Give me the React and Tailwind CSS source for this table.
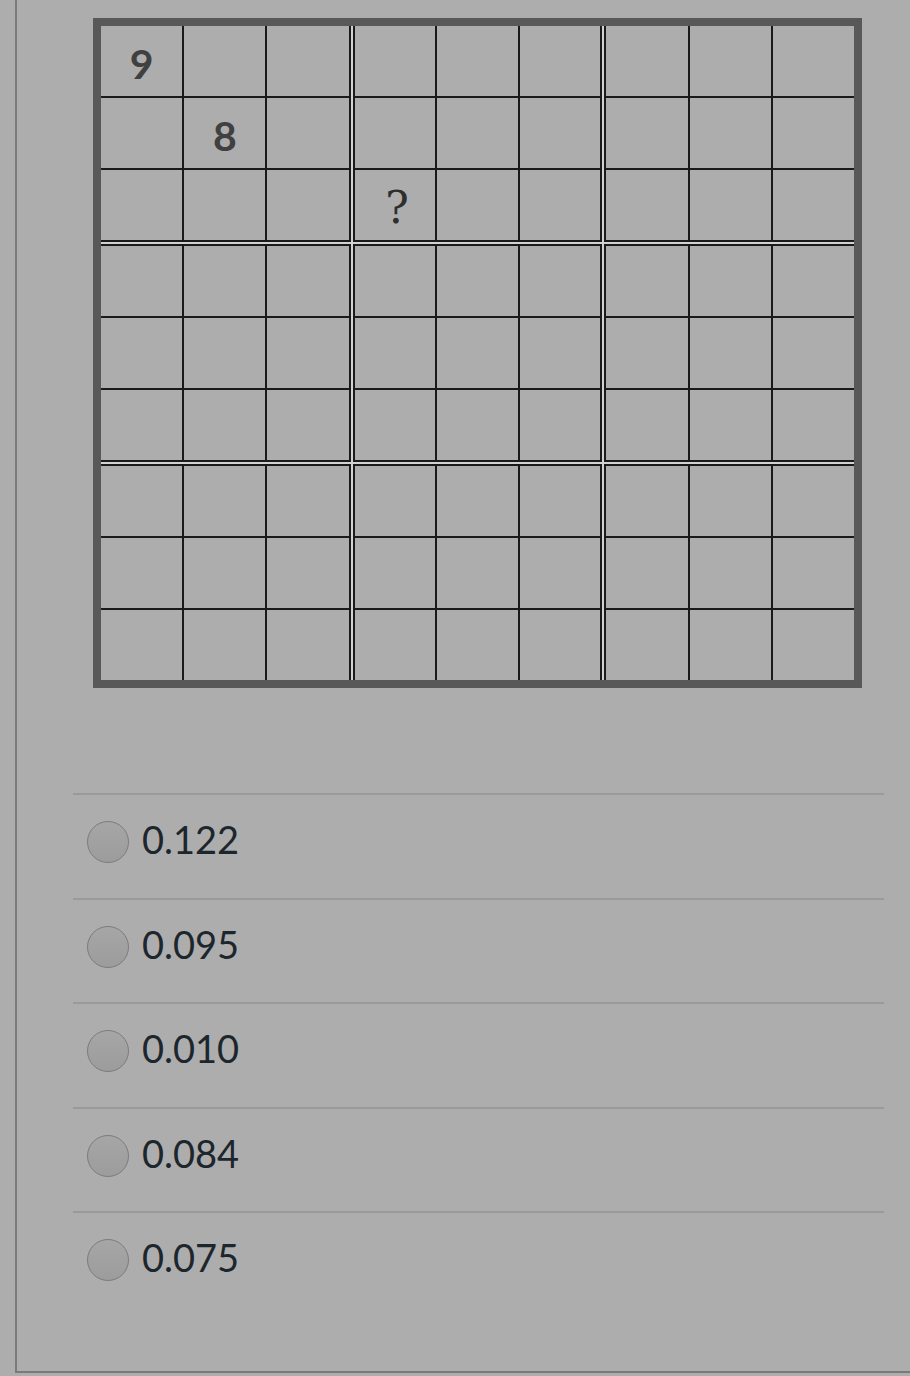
const boxBorders = [
  'border-r-2 border-b-2',
  'border-x-2 border-b-2',
  'border-l-2 border-b-2',
  'border-r-2 border-y-2',
  'border-2',
  'border-l-2 border-y-2',
  'border-r-2 border-t-2',
  'border-x-2 border-t-2',
  'border-l-2 border-t-2',
];

// givens: [box][cell]
const givens = {
  '0-0': { text: '9', kind: 'digit' },
  '0-4': { text: '8', kind: 'digit' },
  '1-6': { text: '?', kind: 'mark' },
};

const options = ['0.122', '0.095', '0.010', '0.084', '0.075'];

function Cell({ value }) {
  return (
    <div className="h-[70px] bg-[#adadad] flex items-center justify-center pt-[5px]">
      {value && value.kind === 'digit' && (
        <span className="text-[41px] leading-none font-bold text-[#404040] font-['Lato',sans-serif]">
          {value.text}
        </span>
      )}
      {value && value.kind === 'mark' && (
        <span className="text-[44px] leading-none text-[#2e2e2e] font-['DejaVu_Serif',serif] pl-[4px]">
          {value.text}
        </span>
      )}
    </div>
  );
}

export default function App() {
  return (
    <div className="min-h-screen bg-[#adadad] pl-[15px] font-['Lato',sans-serif]">
      <div className="h-[1373px] border-l-2 border-b-2 border-[#7a7a7a]">
        {/* Sudoku grid */}
        <div className="pt-[18px] pl-[76px]">
          <div className="w-[769px] border-[8px] border-[#585858] bg-[#d2d2d2] grid grid-cols-3 gap-[2px]">
            {boxBorders.map((b, bi) => (
              <div key={bi} className={`${b} border-[#1a1a1a] bg-[#1a1a1a] grid grid-cols-3 gap-[2px]`}>
                {Array.from({ length: 9 }).map((_, ci) => (
                  <Cell key={ci} value={givens[`${bi}-${ci}`]} />
                ))}
              </div>
            ))}
          </div>
        </div>

        {/* Answer options */}
        <div className="mt-[105px] ml-[56px] mr-[26px]">
          {options.map((opt) => (
            <label key={opt} className="flex items-center h-[104.5px] border-t-2 border-[#9a9a9a] pb-[8px] cursor-pointer">
              <span className="ml-[14px] w-[42px] h-[42px] rounded-full border-[1.5px] border-[#7c7c7c] bg-gradient-to-b from-[#a6a6a6] to-[#9c9c9c]" />
              <span className="ml-[13px] mb-[6px] text-[38px] leading-none text-[#1c262c]">{opt}</span>
            </label>
          ))}
        </div>
      </div>
    </div>
  );
}
